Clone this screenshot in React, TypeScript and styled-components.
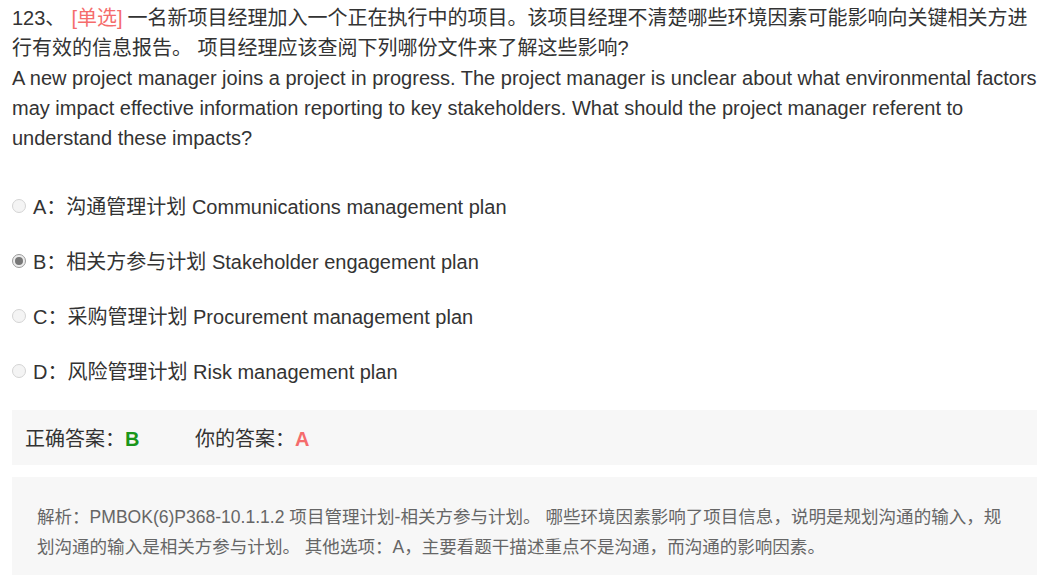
import React from 'react'
import styled, { createGlobalStyle } from 'styled-components'

const GlobalStyle = createGlobalStyle`
  body {
    margin: 0;
    background: #fff;
    font-family: "Liberation Sans", "Noto Sans CJK SC", sans-serif;
    color: #333;
  }
`

const Page = styled.div`
  padding: 3px 9px 0 12px;
`

const Question = styled.div`
  font-size: 20px;
  line-height: 30px;
  color: #333;
`

const Tag = styled.span`
  color: #f56c6c;
  margin: 0 5px 0 6px;
`

const Options = styled.div`
  margin-top: 25px;
  display: flex;
  flex-direction: column;
`

const Option = styled.label`
  display: flex;
  align-items: center;
  height: 55px;
  font-size: 20px;
  color: #333;
`

const Radio = styled.span<{ $checked?: boolean }>`
  box-sizing: border-box;
  width: 14px;
  height: 14px;
  border-radius: 50%;
  border: 1px solid ${p => (p.$checked ? '#9a9a9a' : '#d4d4d4')};
  background: ${p => (p.$checked ? '#ececec' : '#f4f4f4')};
  margin-right: 7px;
  display: flex;
  align-items: center;
  justify-content: center;

  &::after {
    content: '';
    width: 8px;
    height: 8px;
    border-radius: 50%;
    background: ${p => (p.$checked ? '#777' : 'transparent')};
  }
`

const AnswerBox = styled.div`
  margin-top: 12px;
  height: 55px;
  background: #f7f7f7;
  display: flex;
  align-items: center;
  padding-left: 13px;
  font-size: 20px;
  color: #333;
`

const AnswerItem = styled.span`
  width: 170px;
`

const Letter = styled.b<{ $color: string }>`
  color: ${p => p.$color};
  font-family: "Liberation Sans", Arial, sans-serif;
`

const Analysis = styled.div`
  margin-top: 12px;
  background: #f7f7f7;
  padding: 25px 25px 30px;
  font-size: 17.55px;
  line-height: 30px;
  color: #666;
`

const options = [
  { key: 'A', text: '沟通管理计划 Communications management plan' },
  { key: 'B', text: '相关方参与计划 Stakeholder engagement plan', checked: true },
  { key: 'C', text: '采购管理计划 Procurement management plan' },
  { key: 'D', text: '风险管理计划 Risk management plan' },
]

export default function App() {
  return (
    <>
      <GlobalStyle />
      <Page>
        <Question>
          123、<Tag>[单选]</Tag>一名新项目经理加入一个正在执行中的项目。该项目经理不清楚哪些环境因素可能影响向关键相关方进行有效的信息报告。 项目经理应该查阅下列哪份文件来了解这些影响?
          <br />
          A new project manager joins a project in progress. The project manager is unclear about what environmental factors may impact effective information reporting to key stakeholders. What should the project manager referent to understand these impacts?
        </Question>
        <Options>
          {options.map(o => (
            <Option key={o.key}>
              <Radio $checked={o.checked} />
              {o.key}：{o.text}
            </Option>
          ))}
        </Options>
        <AnswerBox>
          <AnswerItem>
            正确答案：<Letter $color="#1a961a">B</Letter>
          </AnswerItem>
          <AnswerItem>
            你的答案：<Letter $color="#f56c6c">A</Letter>
          </AnswerItem>
        </AnswerBox>
        <Analysis>
          解析：PMBOK(6)P368-10.1.1.2 项目管理计划-相关方参与计划。 哪些环境因素影响了项目信息，说明是规划沟通的输入，规划沟通的输入是相关方参与计划。 其他选项：A，主要看题干描述重点不是沟通，而沟通的影响因素。
        </Analysis>
      </Page>
    </>
  )
}
